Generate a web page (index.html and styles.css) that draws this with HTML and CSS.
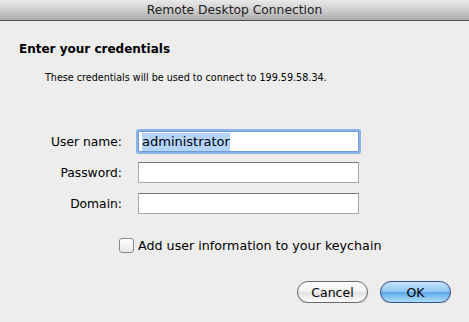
FILE: index.html
```html
<!DOCTYPE html>
<html>

<head>
  <title>Remote Desktop Connection</title>
  <link rel="stylesheet" href="styles.css">
</head>

<body>
  <div class="titlebar">Remote Desktop Connection</div>
  <div class="sheet">
    <h1 class="heading">Enter your credentials</h1>
    <p class="note">These credentials will be used to connect to 199.59.58.34.</p>

    <div class="fields">
      <label class="field-label" for="user">User name:</label>
      <div class="field focused"><span class="selected">administrator</span></div>
      <label class="field-label" for="pass">Password:</label>
      <div class="field"></div>
      <label class="field-label" for="domain">Domain:</label>
      <div class="field"></div>
    </div>

    <div class="keychain">
      <span class="checkbox"></span>
      <span>Add user information to your keychain</span>
    </div>

    <div class="buttons">
      <button class="btn">Cancel</button>
      <button class="btn default">OK</button>
    </div>
  </div>
</body>
</html>
```

FILE: styles.css
```css
body {
  margin: 0;
  background: #ededed;
  font-family: 'DejaVu Sans', 'Liberation Sans', sans-serif;
  font-size: 12px;
  color: #000;
  overflow: hidden;
}

.titlebar {
  height: 20px;
  line-height: 21px;
  text-align: center;
  font-size: 12.3px;
  color: #222;
  background: linear-gradient(#e9e9e9, #cfcfcf 50%, #a9a9a9);
  border-bottom: 1px solid #4f4f4f;
}

.sheet {
  padding: 20px 0 0 19px;
}

.heading {
  margin: 0;
  font-size: 12px;
  font-weight: bold;
  line-height: 16px;
}

.note {
  margin: 14px 0 0 26px;
  font-size: 9.6px;
  line-height: 13px;
}

.fields {
  display: grid;
  grid-template-columns: 103px 221px;
  column-gap: 16px;
  row-gap: 10px;
  align-items: center;
  margin-top: 47px;
}

.field-label {
  text-align: right;
  font-size: 12.3px;
}

.field {
  height: 21px;
  background: #fff;
  border: 1px solid #a8a8a8;
  border-top-color: #7a7a7a;
  box-sizing: border-box;
  font-size: 13px;
  line-height: 19px;
  padding-left: 3px;
}

.field.focused {
  border-color: #6f9bd6;
  box-shadow: 0 0 0 2px #8ab4ea;
  border-radius: 1px;
}

.selected {
  background: #b5d5ff;
  padding: 1px 0 2px;
}

.keychain {
  display: flex;
  align-items: center;
  gap: 4px;
  margin: 24px 0 0 100px;
  font-size: 12.7px;
}

.checkbox {
  width: 13px;
  height: 13px;
  border: 1px solid #8a8a8a;
  border-radius: 3px;
  background: linear-gradient(#ffffff, #e8e8e8);
}

.buttons {
  display: flex;
  justify-content: flex-end;
  gap: 12px;
  margin: 28px 18px 0 0;
}

.btn {
  width: 71px;
  height: 22px;
  border-radius: 11px;
  border: 1px solid #6a6a6a;
  background: linear-gradient(#ffffff, #f1f1f1 50%, #e2e2e2 51%, #fafafa);
  font-family: inherit;
  font-size: 12.5px;
  padding: 0;
  color: #000;
  box-shadow: 0 1px 1px rgba(0, 0, 0, 0.2);
}

.btn.default {
  border-color: #344d8c;
  background: linear-gradient(#c9e3fb, #8cc4f2 50%, #5aa6e8 51%, #aee0fb);
}
```
